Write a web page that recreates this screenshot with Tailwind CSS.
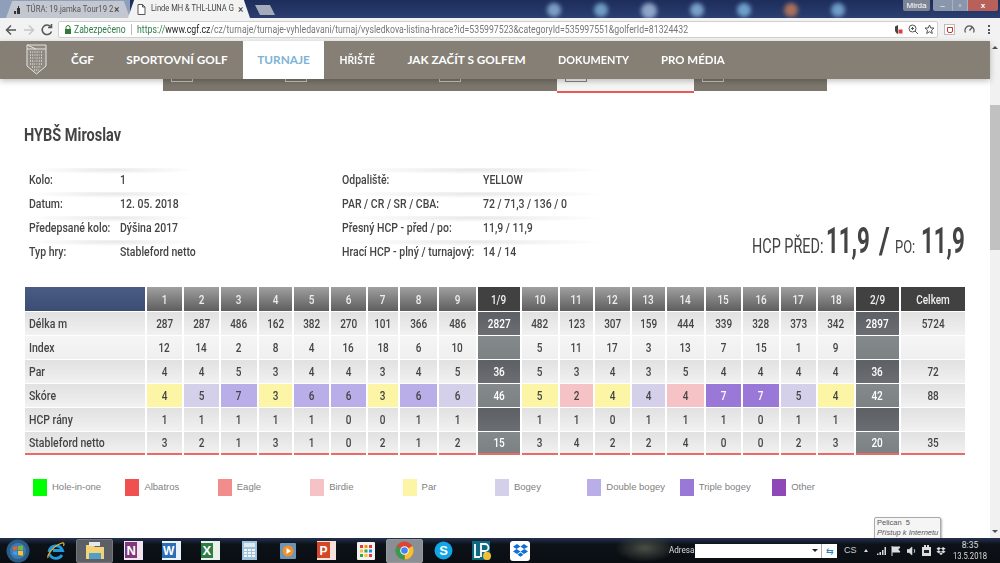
<!DOCTYPE html>
<html lang="cs">
<head>
    <meta charset="UTF-8">
    <title>Linde MH &amp; THL-LUNA Golf Cup</title>
    <script src="https://cdn.jsdelivr.net/npm/@tailwindcss/browser@4"></script>
</head>
<body class="w-[1000px] h-[563px] overflow-hidden flex flex-col bg-white font-['Liberation_Sans',sans-serif]">

    <!-- window title / tabs -->
    <div class="h-[18px] shrink-0 relative overflow-hidden flex bg-gradient-to-b from-[#1d2d5c] to-[#2b3f70]">
        <div class="absolute left-0 top-0 w-[130px] h-[18px] bg-[#8f9fb9]"></div>
        <div class="relative ml-[6px] mt-[1px] w-[124px] h-[17px] bg-[#c3c8d0] [clip-path:polygon(0_100%,5%_0,95%_0,100%_100%)] flex items-center pl-[7px] text-[#555] text-[9px] whitespace-nowrap font-['Roboto',sans-serif]">
            <svg class="shrink-0 mr-[3px]" width="10" height="10" viewBox="0 0 10 10"><path d="M1 9V6h2v3zM4 9V3h1V1h1v2h1v6z" fill="#333"/></svg>
            <span class="inline-block w-[88px] origin-left scale-x-[.86]">TÚRA: 19.jamka Tour19 2</span>
            <span class="text-[#333] text-[10px]">×</span>
        </div>
        <div class="relative -ml-[2px] w-[122px] h-[18px] bg-[#f2f2f2] [clip-path:polygon(0_100%,5%_0,95%_0,100%_100%)] flex items-center pl-[9px] text-[#444] text-[9px] whitespace-nowrap font-['Roboto',sans-serif]">
            <svg class="shrink-0 mr-[5px]" width="9" height="11" viewBox="0 0 9 11"><path d="M1 .5h4.500L8 3v7.500H1zM5.500.5V3H8" fill="#fff" stroke="#555" stroke-width="1"/></svg>
            <span class="inline-block w-[87px] origin-left scale-x-[.84]">Linde MH &amp; THL-LUNA G</span>
            <span class="text-[#333] text-[10px]">×</span>
        </div>
        <div class="relative ml-[5px] mt-[5px] w-[20px] h-[10px] bg-[#a4acbc] [clip-path:polygon(0_0,75%_0,100%_100%,25%_100%)]"></div>
        <div class="ml-[272px] mt-[3px] flex gap-[33px]">
            <span class="w-[14px] h-[14px] rounded-full bg-[#7d9ec4] blur-[2px]"></span>
            <span class="w-[14px] h-[14px] rounded-full bg-[#6f9cc4] blur-[2px]"></span>
            <span class="w-[16px] h-[16px] rounded-full bg-[#8ea4c8] blur-[2px]"></span>
            <span class="w-[14px] h-[14px] rounded-full bg-[#78a0c8] blur-[2px]"></span>
            <span class="w-[14px] h-[14px] rounded-full bg-[#6fa0cc] blur-[2px]"></span>
            <span class="w-[14px] h-[14px] rounded-full bg-[#a8705c] blur-[2px]"></span>
            <span class="w-[14px] h-[14px] rounded-full bg-[#6f9cc8] blur-[2px]"></span>
        </div>
        <!-- window buttons -->
        <div class="absolute right-[2px] top-0 h-[11px] flex text-white text-[8px] leading-[11px] text-center">
            <span class="w-[27px] bg-[#7c8494] rounded-b-[2px] mr-[3px]">Mirda</span>
            <span class="w-[19px] bg-[#8a96ac] rounded-bl-[2px]">–</span>
            <span class="w-[16px] bg-[#8a96ac] border-x border-[#aab2c2]">▫</span>
            <span class="w-[30px] bg-[#b8605a] rounded-br-[2px] font-bold">x</span>
        </div>
    </div>

    <!-- browser toolbar -->
    <div class="h-[23px] shrink-0 bg-[#f2f2f2] flex items-center pl-[4px]">
        <svg class="w-[14px] h-[14px] mr-[4px]" viewBox="0 0 14 14"><path d="M12 7H3M7 2.500 2.500 7 7 11.500" fill="none" stroke="#555" stroke-width="1.500"/></svg>
        <svg class="w-[14px] h-[14px]" viewBox="0 0 14 14"><path d="M2 7h9M7 2.500 11.500 7 7 11.500" fill="none" stroke="#c6c6c6" stroke-width="1.500"/></svg>
        <svg class="w-[14px] h-[14px] ml-[4px]" viewBox="0 0 14 14"><path d="M11.500 8.500A4.800 4.800 0 1 1 10.500 3.500M11.500 1v3.500H8" fill="none" stroke="#555" stroke-width="1.500"/></svg>
        <div class="ml-[4px] w-[880px] h-[17px] bg-white border border-[#d0d0d0] rounded-[2px] flex items-center pl-[5px] pr-[2px] text-[10px] whitespace-nowrap font-['Roboto',sans-serif]">
            <svg class="w-[8px] h-[9px] mr-[2px] shrink-0" viewBox="0 0 8 9"><path d="M2 4V2.500a2 2 0 0 1 4 0V4" fill="none" stroke="#2e7d32"/><rect x="1" y="4" width="6" height="5" fill="#2e7d32"/></svg>
            <span class="inline-block text-[#2f7d4a] w-[52px] shrink-0 origin-left scale-x-[.86]">Zabezpečeno</span>
            <span class="w-px h-[11px] bg-[#bbb] mx-[5px] shrink-0"></span>
            <span class="inline-block text-[#777] w-[750px] origin-left scale-x-[.872]"><span class="text-[#2f7d4a]">https://</span><span class="text-[#222]">www.cgf.cz</span>/cz/turnaje/turnaje-vyhledavani/turnaj/vysledkova-listina-hrace?id=535997523&amp;categoryId=535997551&amp;golferId=81324432</span>
            <svg class="ml-auto w-[10px] h-[11px] shrink-0" viewBox="0 0 10 11"><path d="M4 1 1 2.500V6c0 2 1.500 3.500 3 4z" fill="#444"/><rect x="4.500" y="5.500" width="4" height="4" fill="#e53935"/></svg>
            <svg class="ml-[4.500px] w-[11px] h-[11px] shrink-0" viewBox="0 0 11 11"><circle cx="4.500" cy="4.500" r="3.500" fill="none" stroke="#555"/><path d="m7 7 3 3M3 4.500h3M4.500 3v3" stroke="#555"/></svg>
            <svg class="ml-[5px] w-[11px] h-[11px] shrink-0" viewBox="0 0 11 11"><path d="m5.500 1 1.300 3h3.200L7.500 6.200l.8 3.300-2.800-1.800-2.800 1.800.8-3.300L1 4h3.200z" fill="none" stroke="#555"/></svg>
        </div>
        <span class="w-[11px] h-[11px] ml-[6px] border border-[#bbb] bg-white flex items-center justify-center"><span class="w-[6px] h-[6px] border border-[#c0392b] rounded-b-[2px]"></span></span>
        <svg class="ml-[9px] w-[11px] h-[11px]" viewBox="0 0 11 11"><path d="M1.500 8.500a4.500 4.500 0 1 1 8 0M5.500 6.500 8 3.500" fill="none" stroke="#555" stroke-width="1.200"/></svg>
        <span class="ml-[13px] flex flex-col gap-[1.500px]"><span class="w-[2px] h-[2px] bg-[#555]"></span><span class="w-[2px] h-[2px] bg-[#555]"></span><span class="w-[2px] h-[2px] bg-[#555]"></span></span>
    </div>

    <div class="flex-1 flex min-h-0 relative">
        <!-- page -->
        <div class="w-[990px] relative">
            <nav class="h-[38px] bg-[#857f76] flex items-stretch shadow-[0_2px_6px_rgba(0,0,0,0.25)] relative text-[11.800px] font-bold text-white font-['Lato',sans-serif] whitespace-nowrap pl-[26px]">
                <svg class="w-[21px] h-[31px] mt-[3px] mr-[7px]" viewBox="0 0 21 31">
                    <path d="M1 1h19v21l-9.500 8L1 22z" fill="#8f8a82" stroke="#e6e4e0"/>
                    <path d="M1 5h19M1 1l9 4" fill="none" stroke="#e6e4e0"/>
                    <path d="M4 8h13M4 11h13M4 14h13M4 17h13M4 20h13M6 23h9M8 26h5" fill="none" stroke="#dcdad6" stroke-width="1.600" stroke-dasharray="1 1.200"/>
                    <path d="M7 7l3 16M14 7l-3 16" fill="none" stroke="#8f8a82" stroke-width=".7"/>
                </svg>
                <a class="w-[57px] flex items-center justify-center">ČGF</a>
                <a class="w-[132px] flex items-center justify-center">SPORTOVNÍ GOLF</a>
                <a class="w-[81px] flex items-center justify-center bg-white text-[#7db3d6]">TURNAJE</a>
                <a class="w-[66px] flex items-center justify-center"><span class="inline-block scale-x-[.88]">HŘIŠTĚ</span></a>
                <a class="w-[153px] flex items-center justify-center">JAK ZAČÍT S GOLFEM</a>
                <a class="w-[101px] flex items-center justify-center"><span class="inline-block scale-x-[.92]">DOKUMENTY</span></a>
                <a class="w-[98px] flex items-center justify-center"><span class="inline-block scale-x-[.97]">PRO MÉDIA</span></a>
            </nav>

            <!-- sub menu showing under the nav -->
            <div class="ml-[163px] w-[664px] h-[14px] flex items-start">
                <div class="w-[394px] h-[12px] bg-[#7c766c] flex items-start pl-[8px] gap-[92px]">
                    <span class="w-[22px] h-[3px] bg-[#7c766c] border-b border-x border-[#c8c5c0]"></span>
                    <span class="w-[22px] h-[3px] bg-[#7c766c] border-b border-x border-[#c8c5c0]"></span>
                    <span class="ml-[40px] w-[22px] h-[3px] bg-[#7c766c] border-b border-x border-[#c8c5c0]"></span>
                </div>
                <div class="w-[137px] h-[14px] bg-[#f5f5f5] border-b-[2px] border-[#ea5a55] pl-[8px]">
                    <span class="block w-[22px] h-[3px] border-b border-x border-[#8a857d]"></span>
                </div>
                <div class="w-[133px] h-[12px] bg-[#7c766c] pl-[8px]">
                    <span class="block w-[22px] h-[3px] border-b border-x border-[#c8c5c0]"></span>
                </div>
            </div>

            <div class="font-['Roboto',sans-serif] text-[#444] whitespace-nowrap">
                <h1 class="ml-[24px] mt-[31px] h-[22px] w-[120px] text-[17.500px] leading-[22px] font-bold origin-left scale-x-[.83]">HYBŠ Miroslav</h1>

                <div class="mt-[22px] h-[96px] flex relative text-[12.500px] font-medium">
                    <div class="ml-[29px] w-[313px]">
                        <div class="w-[168px] h-[24px] flex items-center bg-[radial-gradient(ellipse_50%_4px_at_50%_2px,#e8e8e8,transparent)]"><span class="inline-block w-[91px] shrink-0 origin-left scale-x-[.84]">Kolo:</span><span class="inline-block origin-left scale-x-[.84]">1</span></div>
                        <div class="w-[168px] h-[24px] flex items-center bg-[radial-gradient(ellipse_50%_4px_at_50%_2px,#e8e8e8,transparent)]"><span class="inline-block w-[91px] shrink-0 origin-left scale-x-[.84]">Datum:</span><span class="inline-block origin-left scale-x-[.84]">12. 05. 2018</span></div>
                        <div class="w-[168px] h-[24px] flex items-center bg-[radial-gradient(ellipse_50%_4px_at_50%_2px,#e8e8e8,transparent)]"><span class="inline-block w-[91px] shrink-0 origin-left scale-x-[.84]">Předepsané kolo:</span><span class="inline-block origin-left scale-x-[.84]">Dýšina 2017</span></div>
                        <div class="w-[168px] h-[24px] flex items-center bg-[radial-gradient(ellipse_50%_4px_at_50%_2px,#e8e8e8,transparent)]"><span class="inline-block w-[91px] shrink-0 origin-left scale-x-[.84]">Typ hry:</span><span class="inline-block origin-left scale-x-[.84]">Stableford netto</span></div>
                    </div>
                    <div class="w-[265px]">
                        <div class="h-[24px] flex items-center bg-[radial-gradient(ellipse_50%_4px_at_50%_2px,#e8e8e8,transparent)]"><span class="inline-block w-[141px] shrink-0 origin-left scale-x-[.84]">Odpaliště:</span><span class="inline-block origin-left scale-x-[.84]">YELLOW</span></div>
                        <div class="h-[24px] flex items-center bg-[radial-gradient(ellipse_50%_4px_at_50%_2px,#e8e8e8,transparent)]"><span class="inline-block w-[141px] shrink-0 origin-left scale-x-[.84]">PAR / CR / SR / CBA:</span><span class="inline-block origin-left scale-x-[.84]">72 / 71,3 / 136 / 0</span></div>
                        <div class="h-[24px] flex items-center bg-[radial-gradient(ellipse_50%_4px_at_50%_2px,#e8e8e8,transparent)]"><span class="inline-block w-[141px] shrink-0 origin-left scale-x-[.84]">Přesný HCP - před / po:</span><span class="inline-block origin-left scale-x-[.84]">11,9 / 11,9</span></div>
                        <div class="h-[24px] flex items-center bg-[radial-gradient(ellipse_50%_4px_at_50%_2px,#e8e8e8,transparent)]"><span class="inline-block w-[141px] shrink-0 origin-left scale-x-[.84]">Hrací HCP - plný / turnajový:</span><span class="inline-block origin-left scale-x-[.84]">14 / 14</span></div>
                    </div>
                    <div class="absolute left-[752px] bottom-[3px] flex items-baseline font-normal leading-[40px] h-[40px]">
                        <span class="inline-block w-[74px] text-[20px] origin-left scale-x-[.72]">HCP PŘED:</span>
                        <span class="inline-block w-[53px] text-[36px] font-bold origin-left scale-x-[.62]">11,9</span>
                        <span class="inline-block w-[16px] text-[36px] font-bold origin-left scale-x-[.8]">/</span>
                        <span class="inline-block w-[26px] text-[18px] origin-left scale-x-[.72]">PO:</span>
                        <span class="inline-block w-[44px] text-[36px] font-bold origin-left scale-x-[.62]">11,9</span>
                    </div>
                </div>

                <!-- score table, filled in below -->
                <div id="score" class="mt-[23px] ml-[25px] w-[940px] grid gap-x-[2px] gap-y-px text-[12.500px] font-medium grid-cols-[120px_35px_35px_36px_33px_35px_35px_30px_37px_37px_42px_36px_33px_35px_33px_37px_35px_36px_35px_36px_43px_64px]"></div>
            </div>

            <!-- legend -->
            <div class="mt-[24px] ml-[33px] flex text-[9.500px] text-[#808080] h-[17px]">
                <div class="w-[92.400px] flex items-center gap-[5px]"><span class="w-[14px] h-[17px] bg-[#00ff00]"></span>Hole-in-one</div>
                <div class="w-[92.400px] flex items-center gap-[5px]"><span class="w-[14px] h-[17px] bg-[#f05050]"></span>Albatros</div>
                <div class="w-[92.400px] flex items-center gap-[5px]"><span class="w-[14px] h-[17px] bg-[#f28d8d]"></span>Eagle</div>
                <div class="w-[92.400px] flex items-center gap-[5px]"><span class="w-[14px] h-[17px] bg-[#f5c3c6]"></span>Birdie</div>
                <div class="w-[92.400px] flex items-center gap-[5px]"><span class="w-[14px] h-[17px] bg-[#fdf5a6]"></span>Par</div>
                <div class="w-[92.400px] flex items-center gap-[5px]"><span class="w-[14px] h-[17px] bg-[#d4d0ea]"></span>Bogey</div>
                <div class="w-[92.400px] flex items-center gap-[5px]"><span class="w-[14px] h-[17px] bg-[#b9aee8]"></span>Double bogey</div>
                <div class="w-[92.400px] flex items-center gap-[5px]"><span class="w-[14px] h-[17px] bg-[#9a78d8]"></span>Triple bogey</div>
                <div class="w-[92.400px] flex items-center gap-[5px]"><span class="w-[14px] h-[17px] bg-[#8e48b8]"></span>Other</div>
            </div>

            <!-- network tooltip over the page -->
            <div class="absolute left-[874px] top-[476px] w-[67px] h-[22px] bg-[#f5f5f5] border border-[#aaa] rounded-t-[2px] shadow-[1px_1px_2px_rgba(0,0,0,0.3)] pl-[2px] text-[7.500px] leading-[10px] text-[#555] whitespace-nowrap">
                <div>Pelican&nbsp; 5</div>
                <div class="italic">Přístup k Internetu</div>
            </div>
        </div>

        <!-- scrollbar -->
        <div class="w-[10px] bg-[#f1f1f1] flex flex-col items-center justify-between py-[5px]">
            <span class="w-0 h-0 border-x-[3px] border-x-transparent border-b-[3px] border-b-[#505050]"></span>
            <span class="w-0 h-0 border-x-[3px] border-x-transparent border-t-[3px] border-t-[#505050]"></span>
        </div>
        <div class="absolute right-0 top-[64px] w-[10px] h-[145px] bg-[#c1c1c1]"></div>
    </div>

    <!-- windows taskbar -->
    <div class="h-[25px] shrink-0 relative z-10 bg-[radial-gradient(ellipse_30px_14px_at_645px_10px,#4a4f45,transparent),linear-gradient(#24324f,#0d1219_25%,#0a0e12)] flex items-center text-white">
        <div class="w-[36px] flex justify-center">
            <svg width="24" height="24" viewBox="0 0 24 24"><circle cx="12" cy="12" r="11.500" fill="#2b5c86"/><circle cx="12" cy="12" r="8" fill="#3a7cb0"/><path d="M7 8l4-1v4l-4 .500z" fill="#e8612c"/><path d="M12 7l5-.500v4.500l-5 .300z" fill="#7cb342"/><path d="M7 12.500l4-.500v4.500l-4-1z" fill="#3d9be9"/><path d="M12 12l5-.300v5l-5-.700z" fill="#fdc02f"/></svg>
        </div>
        <div class="w-[40px] flex justify-center">
            <svg width="20" height="20" viewBox="0 0 20 20"><path d="M3 11a7 7 0 0 1 13.500-1.500H7M3.500 13a7 7 0 0 0 12.500 1" fill="none" stroke="#1e9be0" stroke-width="2.800"/><path d="M2 17C1 14 7 5 16 2c2-.500 2.500 1 1.500 3" fill="none" stroke="#f0b429" stroke-width="1.200"/></svg>
        </div>
        <div class="w-[37px] h-[24px] bg-[#5c6066] border border-[#777] rounded-[2px] flex justify-center items-center">
            <svg width="22" height="20" viewBox="0 0 22 20"><path d="M2 4h7l2 2h9v12H2z" fill="#f3d27a"/><rect x="5" y="1" width="11" height="4" fill="#e8e8e8"/><rect x="5" y="12" width="12" height="6" fill="#4f9fc8"/></svg>
        </div>
        <div class="ml-[1px] w-[38px] flex justify-center">
            <svg width="19" height="19" viewBox="0 0 19 19"><rect width="19" height="19" fill="#f2e6f2"/><rect width="12" height="16" y="1" x="1" fill="#80397b"/><text x="2.500" y="14" font-size="13" font-weight="700" fill="#fff" font-family="Liberation Sans">N</text></svg>
        </div>
        <div class="w-[39px] flex justify-center">
            <svg width="19" height="19" viewBox="0 0 19 19"><rect width="19" height="19" fill="#eaf2fa"/><rect width="14" height="15" y="2" fill="#2b6fb8"/><text x="1" y="14" font-size="12" font-weight="700" fill="#fff" font-family="Liberation Sans">W</text></svg>
        </div>
        <div class="w-[39px] flex justify-center">
            <svg width="19" height="19" viewBox="0 0 19 19"><rect width="19" height="19" fill="#e8f2e8"/><rect width="12" height="15" y="2" fill="#2e7d46"/><text x="1.500" y="14" font-size="13" font-weight="700" fill="#fff" font-family="Liberation Sans">X</text></svg>
        </div>
        <div class="w-[39px] flex justify-center">
            <svg width="15" height="19" viewBox="0 0 15 19"><rect width="15" height="19" fill="#9cc4dc"/><rect x="2" y="2" width="11" height="4" fill="#dceaf2"/><path d="M2 8h3v2H2zM6 8h3v2H6zM10 8h3v2h-3zM2 11h3v2H2zM6 11h3v2H6zM10 11h3v2h-3zM2 14h3v2H2zM6 14h3v2H6zM10 14h3v2h-3z" fill="#f5f5f5"/></svg>
        </div>
        <div class="w-[38px] flex justify-center">
            <svg width="16" height="16" viewBox="0 0 16 16"><rect width="16" height="16" rx="1" fill="#6d94b4"/><circle cx="8" cy="8" r="5.500" fill="#f0902a"/><path d="M6.500 5v6L11 8z" fill="#fff"/></svg>
        </div>
        <div class="w-[39px] flex justify-center">
            <svg width="19" height="19" viewBox="0 0 19 19"><rect width="19" height="19" fill="#f5e2dc"/><rect width="13" height="16" y="1" fill="#d24726"/><text x="2.500" y="13.500" font-size="12" font-weight="700" fill="#fff" font-family="Liberation Sans">P</text></svg>
        </div>
        <div class="w-[40px] flex justify-center">
            <svg width="18" height="18" viewBox="0 0 18 18"><rect width="18" height="18" rx="1" fill="#f2f2f2"/><path d="M3 3h3v3H3z" fill="#e53935"/><path d="M7.500 3h3v3h-3z" fill="#fb8c00"/><path d="M12 3h3v3h-3z" fill="#e53935"/><path d="M3 7.500h3v3H3z" fill="#fbc02d"/><path d="M7.500 7.500h3v3h-3z" fill="#43a047"/><path d="M12 7.500h3v3h-3z" fill="#1e88e5"/><path d="M3 12h3v3H3z" fill="#43a047"/><path d="M7.500 12h3v3h-3z" fill="#fbc02d"/><path d="M12 12h3v3h-3z" fill="#e53935"/></svg>
        </div>
        <div class="w-[37px] h-[24px] bg-[#8a8f96] border border-[#999] rounded-[2px] flex justify-center items-center">
            <svg width="19" height="19" viewBox="0 0 19 19"><circle cx="9.500" cy="9.500" r="9" fill="#db4437"/><path d="M9.500 9.500 17.300 5A9 9 0 0 1 9.500 18.500z" fill="#fbc02d"/><path d="M9.500 9.500V18.500A9 9 0 0 1 1.700 5z" fill="#3c9a4e"/><circle cx="9.500" cy="9.500" r="4.300" fill="#fff"/><circle cx="9.500" cy="9.500" r="3.300" fill="#4285f4"/></svg>
        </div>
        <div class="ml-[1px] w-[38px] flex justify-center">
            <svg width="19" height="19" viewBox="0 0 19 19"><circle cx="9.500" cy="9.500" r="9" fill="#12a5e8"/><text x="9.500" y="14" text-anchor="middle" font-size="13" font-weight="700" fill="#fff" font-family="Liberation Sans">S</text></svg>
        </div>
        <div class="w-[39px] flex justify-center">
            <svg width="20" height="20" viewBox="0 0 20 20"><rect width="18" height="19" fill="#0e6a80"/><path d="M3 3v13h5M9 16V3h4a3 3 0 0 1 0 7H9M13 10l3 5" fill="none" stroke="#fff" stroke-width="1.800"/><circle cx="15" cy="15" r="4" fill="#f0c030"/></svg>
        </div>
        <div class="w-[20px] h-[20px] ml-[9px] rounded-[3px] bg-white flex items-center justify-center">
            <svg width="15" height="13" viewBox="0 0 15 13"><path d="M4 0 0 2.700l3.500 2.400 4-2.500zM11 0l4 2.700-4 2.400-3.500-2.500zM3.500 5.100 0 7.600 4 10l3.500-2.500zM11.500 5.100 15 7.600 11 10 7.500 7.500zM4.500 10.800 7.500 8.500l3 2.300-3 2z" fill="#0f6fd4"/></svg>
        </div>

        <span class="ml-[139px] w-[23px] shrink-0 inline-block text-[9px] text-[#ddd] font-['Roboto',sans-serif] origin-left scale-x-[.9]">Adresa</span>
        <div class="ml-[3px] w-[142px] h-[14px] flex bg-white">
            <div class="w-[127px] flex items-center justify-end pr-[3px] border-r border-[#aaa]"><span class="w-0 h-0 border-x-[3px] border-x-transparent border-t-[3px] border-t-[#222]"></span></div>
            <div class="flex-1 text-[#2f7fc8] text-[9px] leading-[14px] text-center">⇆</div>
        </div>
        <span class="ml-[7px] w-[12px] text-[9px] text-[#ccc]">CS</span>
        <span class="ml-[8px] w-0 h-0 border-x-[2px] border-x-transparent border-b-[3px] border-b-[#ddd]"></span>
        <div class="ml-[9px] w-[69px] flex items-center justify-between">
            <svg width="9" height="8" viewBox="0 0 9 8"><path d="M0 6.500h1.500V8H0zM2.500 5H4v3H2.500zM5 3h1.500v5H5zM7.500 0H9v8H7.500z" fill="#ddd"/></svg>
            <svg width="10" height="10" viewBox="0 0 10 10"><path d="M1 0v10M1 1h8L7 3.500 9 6H1" fill="#ddd" stroke="#ddd"/></svg>
            <svg width="10" height="10" viewBox="0 0 10 10"><path d="M0 3.500h2L5 1v8L2 6.500H0zM7 3a3 3 0 0 1 0 4" fill="#ddd" stroke="#ddd" stroke-width=".6"/></svg>
            <svg width="9" height="11" viewBox="0 0 9 11"><rect y="2" width="9" height="9" fill="#ddd"/><rect x="2" width="2" height="3" fill="#ddd"/><rect x="5" width="2" height="3" fill="#ddd"/><rect x="2" y="5" width="5" height="3" fill="#222"/></svg>
            <svg width="10" height="8" viewBox="0 0 15 13"><path d="M4 0 0 2.700l3.500 2.400 4-2.500zM11 0l4 2.700-4 2.400-3.500-2.500zM3.500 5.100 0 7.600 4 10l3.500-2.500zM11.500 5.100 15 7.600 11 10 7.500 7.500zM4.500 10.800 7.500 8.500l3 2.300-3 2z" fill="#ddd"/></svg>
        </div>
        <div class="ml-[9px] w-[30px] flex flex-col items-center text-[8.500px] leading-[11px] text-[#ddd] whitespace-nowrap font-['Roboto',sans-serif]">
            <span>8:35</span>
            <span class="inline-block scale-x-[.9]">13.5.2018</span>
        </div>
    </div>

    <script>
        const HOLES = [1, 2, 3, 4, 5, 6, 7, 8, 9, '1/9', 10, 11, 12, 13, 14, 15, 16, 17, 18, '2/9', 'Celkem'];
        const SCORE_ROWS = [
            ['Délka m', 287, 287, 486, 162, 382, 270, 101, 366, 486, 2827, 482, 123, 307, 159, 444, 339, 328, 373, 342, 2897, 5724],
            ['Index', 12, 14, 2, 8, 4, 16, 18, 6, 10, '', 5, 11, 17, 3, 13, 7, 15, 1, 9, '', ''],
            ['Par', 4, 4, 5, 3, 4, 4, 3, 4, 5, 36, 5, 3, 4, 3, 5, 4, 4, 4, 4, 36, 72],
            ['Skóre', 4, 5, 7, 3, 6, 6, 3, 6, 6, 46, 5, 2, 4, 4, 4, 7, 7, 5, 4, 42, 88],
            ['HCP rány', 1, 1, 1, 1, 1, 0, 0, 1, 1, '', 1, 1, 0, 1, 1, 1, 0, 1, 1, '', ''],
            ['Stableford netto', 3, 2, 1, 3, 1, 0, 2, 1, 2, 15, 3, 4, 2, 2, 4, 0, 0, 2, 3, 20, 35]
        ];
        // colour of each score cell, by hole order
        const SCORE_COLORS = {
            y: 'bg-[#fdf5a6]', b: 'bg-[#d4d0ea]', d: 'bg-[#b9aee8]', t: 'bg-[#9a78d8] text-white', r: 'bg-[#f5c3c6]'
        };
        const SCORE_KEYS = 'ybdyddydb-yrybrttby';

        let html = '<div class="h-[24px] bg-gradient-to-b from-[#4a5c85] to-[#3c4d73]"></div>';
        HOLES.forEach(h => {
            const dark = typeof h === 'string';
            html += `<div class="h-[24px] pt-[2px] flex items-center justify-center text-[#eee] ${dark ? 'bg-[#414141]' : 'bg-gradient-to-b from-[#a0a0a0] to-[#5f5f5f]'}"><span class="inline-block scale-x-[.8]">${h}</span></div>`;
        });
        SCORE_ROWS.forEach((row, r) => {
            const light = r === 1;
            const last = r === SCORE_ROWS.length - 1;
            const rowBg = light ? 'bg-gradient-to-b from-[#f5f5f5] to-[#efefef]' : 'bg-gradient-to-b from-[#e1e1e1] to-[#f1f1f1]';
            const line = last ? 'border-b-[2px] border-[#ea6a66]' : '';
            row.forEach((v, i) => {
                if (i === 0) {
                    html += `<div class="h-[23px] pt-[2px] flex items-center pl-[4px] ${rowBg} ${line}"><span class="inline-block origin-left scale-x-[.84]">${v}</span></div>`;
                    return;
                }
                let cellBg = rowBg;
                if (i === 10 || i === 20) {
                    cellBg = (r % 2 === 0 ? 'bg-gradient-to-b from-[#5d6165] to-[#6a6e72]' : 'bg-gradient-to-b from-[#84898c] to-[#7c8184]') + ' text-white';
                } else if (r === 3 && i < 20) {
                    cellBg = SCORE_COLORS[SCORE_KEYS[i - 1]];
                }
                html += `<div class="h-[23px] pt-[2px] flex items-center justify-center ${cellBg} ${line}"><span class="inline-block scale-x-[.8]">${v}</span></div>`;
            });
        });
        document.getElementById('score').innerHTML = html;
    </script>
</body>
</html>
